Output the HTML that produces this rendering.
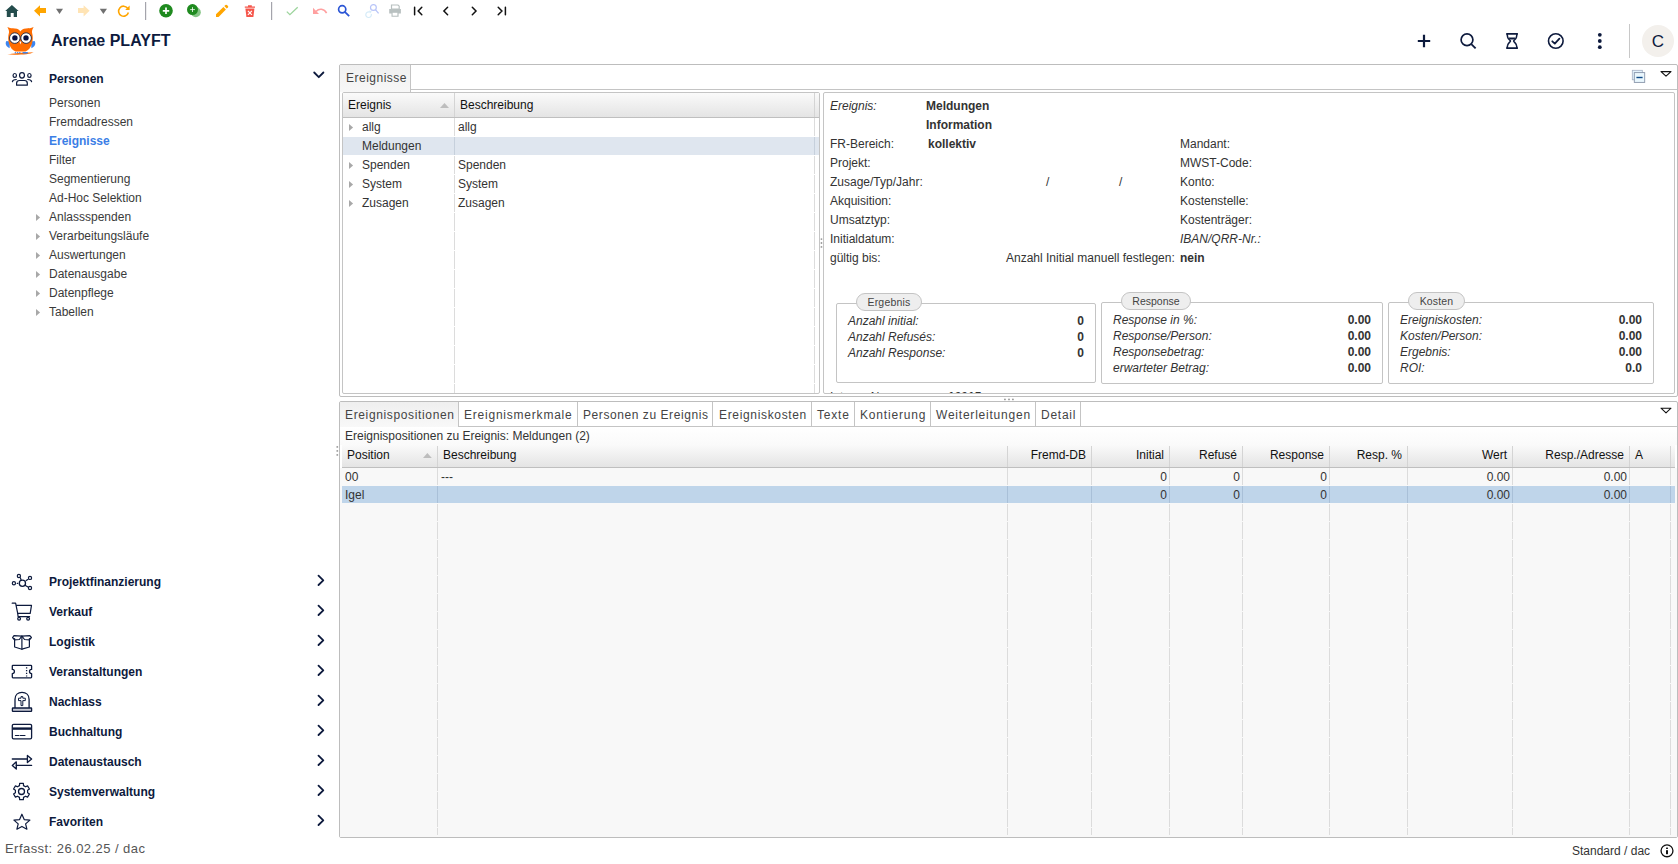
<!DOCTYPE html>
<html><head><meta charset="utf-8">
<style>
*{box-sizing:border-box;margin:0;padding:0}
html,body{width:1678px;height:864px;overflow:hidden;background:#fff;font-family:"Liberation Sans",sans-serif;font-size:12px;color:#333}
.a{position:absolute}
.t{position:absolute;white-space:nowrap;line-height:14px}
svg{position:absolute;overflow:visible}
/* sidebar */
.mh{position:absolute;left:49px;font-weight:bold;color:#0d1a3d;font-size:12px;line-height:14px;white-space:nowrap}
.mi{position:absolute;left:49px;color:#3a3a3a;font-size:12px;line-height:14px;white-space:nowrap}
.tri{position:absolute;width:0;height:0;border-top:4px solid transparent;border-bottom:4px solid transparent;border-left:4px solid #a8a8a8}
/* panels */
.box{position:absolute;border:1px solid #bdbdbd}
.hdr{position:absolute;background:linear-gradient(#fafafa,#e4e4e4);border-bottom:1px solid #bfbfbf;color:#111}
.tab{position:absolute;top:0;height:100%;border-right:1px solid #c4c4c4;color:#444;font-size:12px;letter-spacing:0.5px;line-height:14px;padding-top:6px;white-space:nowrap}
.lbl{position:absolute;white-space:nowrap;line-height:14px;color:#333}
.it{font-style:italic}
.b{font-weight:bold}
.vd{position:absolute;width:0;border-left:1px dashed #d8d8d8}
</style></head><body>

<!-- ===== TOOLBAR ===== -->
<svg style="left:0;top:0" width="520" height="24" viewBox="0 0 520 24">
 <!-- home -->
 <path d="M11.9 5 L5.2 10.9 H6.8 V17 H10.7 V12.9 H13.7 V17 H17 V10.9 H18.6 Z" fill="#244c4c"/>
 <!-- back -->
 <path d="M34 10.8 L40 5.2 V8.1 H46 V13.1 H40 V16.5 Z" fill="#ffa500"/>
 <path d="M56 8.8 H63 L59.5 14 Z" fill="#707070"/>
 <!-- fwd -->
 <path d="M89.6 10.8 L83.6 5.2 V8.1 H78 V13.1 H83.6 V16.5 Z" fill="#ffe4b5"/>
 <path d="M99.8 8.8 H107 L103.4 14 Z" fill="#707070"/>
 <!-- refresh -->
 <path d="M127.6 8.2 A5 5 0 1 0 128.4 12.5" fill="none" stroke="#ffa500" stroke-width="1.6"/>
 <path d="M129.6 5.6 V10 H125.2 Z" fill="#ffa500"/>
 <rect x="145" y="2" width="1.2" height="18" fill="#a4a4ac"/>
 <!-- add -->
 <circle cx="166" cy="10.8" r="6.8" fill="#1f8a1f"/>
 <path d="M166 7.6 V14 M162.8 10.8 H169.2" stroke="#fff" stroke-width="1.7"/>
 <!-- add copy -->
 <circle cx="195.8" cy="12.2" r="5" fill="#86c586"/>
 <circle cx="192.5" cy="9.6" r="5.5" fill="#1f8a1f"/>
 <path d="M192.5 7.2 V12 M190.1 9.6 H194.9" stroke="#fff" stroke-width="0.8"/>
 <!-- pencil -->
 <path d="M216 16.9 L216 14.3 L223.4 6.9 L225.9 9.4 L218.6 16.9 Z" fill="#ffa500"/>
 <path d="M224.3 6.1 L225.5 4.9 Q226.2 4.4 226.9 5 L228 6.1 Q228.5 6.8 228 7.4 L226.7 8.6 Z" fill="#ffa500"/>
 <!-- trash -->
 <path d="M244.8 6.4 H255 V7.8 H244.8 Z M248 5.2 H251.8 V6.4 H248 Z" fill="#f5554a"/>
 <path d="M245.4 8.4 H254.4 L253.4 17 H246.4 Z" fill="#f5554a"/>
 <path d="M247.9 10.9 L251.9 14.9 M251.9 10.9 L247.9 14.9" stroke="#fff" stroke-width="1.2"/>
 <rect x="271" y="2" width="1.2" height="18" fill="#a4a4ac"/>
 <!-- check -->
 <path d="M286.8 11.6 L289.9 14.7 L297.7 7.3" fill="none" stroke="#9cd49c" stroke-width="1.3"/>
 <!-- undo -->
 <path d="M316 11.5 C319 8.3 324 8.3 326.6 13.2" fill="none" stroke="#ffa0a0" stroke-width="1.6"/>
 <path d="M313 7.8 V14 H319 Z" fill="#ffa0a0"/>
 <!-- search -->
 <circle cx="342.2" cy="9.3" r="3.6" fill="none" stroke="#2a55d5" stroke-width="1.7"/>
 <path d="M344.8 11.9 L349.2 16.1" stroke="#2a55d5" stroke-width="1.8"/>
 <!-- search refresh -->
 <circle cx="373.4" cy="7.5" r="2.9" fill="none" stroke="#b8c4f8" stroke-width="1.2"/>
 <path d="M375.4 9.6 L378.6 13.4" stroke="#b8c4f8" stroke-width="1.3"/>
 <path d="M371.3 14 A2.8 2.8 0 1 1 369.6 12.1" fill="none" stroke="#d5ebf8" stroke-width="1.2"/><path d="M369 10.6 L371.8 11.6 L370 13.6 Z" fill="#d5ebf8"/>
 <!-- print -->
 <path d="M391.5 5 H398 L399.2 6.2 V9 H391.5 Z" fill="none" stroke="#b8c0c0" stroke-width="1.2"/>
 <path d="M389.2 9 H400.9 V13.6 H398.6 V16.7 H391.5 V13.6 H389.2 Z" fill="#b8c0c0"/>
 <rect x="392.6" y="12.8" width="4.8" height="2.9" fill="#fff"/>
 <!-- nav -->
 <g fill="none" stroke="#111" stroke-width="1.5" stroke-linecap="round" stroke-linejoin="miter">
  <path d="M414.6 7.3 V14.7 M421.8 7.3 L418.2 11 L421.8 14.7"/>
  <path d="M447.6 7.3 L443.9 11 L447.6 14.7"/>
  <path d="M472.3 7.3 L476 11 L472.3 14.7"/>
  <path d="M498.2 7.3 L501.9 11 L498.2 14.7 M505.4 7.3 V14.7"/>
 </g>
</svg>

<!-- ===== HEADER ===== -->
<svg style="left:0;top:0" width="40" height="60" viewBox="0 0 40 60">
 <path d="M6.4 41 C4.8 43.5 6 46.6 9.6 48.2 L10 41.5 Z" fill="#3d86f0"/>
 <path d="M34.6 41 C36.2 43.5 35 46.6 31.4 48.2 L31 41.5 Z" fill="#3d86f0"/>
 <path d="M7.4 27.1 C10 28.6 12 28.2 15 28.4 C18 28.6 19.6 30 20.4 31.6 C21.2 30 23 28.6 26 28.4 C29 28.2 31 28.6 33.6 27.1 C32.6 29.4 31.8 30.6 32 32.4 C33 36 33.2 40 31.8 44 C30.6 47.6 28.6 50.4 25.5 51.4 H15.5 C12.4 50.4 10.4 47.6 9.2 44 C7.8 40 8 36 9 32.4 C9.2 30.6 8.4 29.4 7.4 27.1 Z" fill="#ff6d00"/>
 <circle cx="14.8" cy="38.1" r="5.3" fill="#fff" stroke="#1b2340" stroke-width="0.9"/>
 <circle cx="26.1" cy="38.1" r="5.3" fill="#fff" stroke="#1b2340" stroke-width="0.9"/>
 <circle cx="14.9" cy="37.9" r="2.7" fill="#0a1040"/>
 <circle cx="26" cy="37.9" r="2.7" fill="#0a1040"/>
 <path d="M19.4 41.5 L21.4 41.5 L20.4 44.6 Z" fill="#fff"/>
 <path d="M7.2 54.6 C12 53.2 22 52.6 33.6 52.2 C30 54.4 20 55 7.2 54.6 Z" fill="#ff6d00"/>
 <g fill="#3d86f0"><circle cx="15.4" cy="52.7" r="0.8"/><circle cx="17.6" cy="52.7" r="0.8"/><circle cx="19.8" cy="52.7" r="0.8"/><rect x="22.4" y="51.9" width="5.6" height="1.6" rx="0.8"/></g>
</svg>
<!-- right header icons -->
<svg style="left:1400px;top:20px" width="278" height="44" viewBox="1400 20 278 44">
 <path d="M1424 34.8 V47.2 M1417.8 41 H1430.2" stroke="#0d1a3d" stroke-width="2.2"/>
 <circle cx="1467" cy="39.8" r="5.9" fill="none" stroke="#0d1a3d" stroke-width="1.7"/>
 <path d="M1471.3 44.1 L1475.6 48.4" stroke="#0d1a3d" stroke-width="1.8"/>
 <path d="M1506.2 33.8 H1517.9 M1506.2 48.2 H1517.9" stroke="#0d1a3d" stroke-width="1.7"/>
 <path d="M1507.1 34 L1507.7 37.4 C1508.2 39.4 1510.4 40.2 1510.5 41 C1510.4 41.8 1508 43 1507.6 45.4 L1507.1 48 M1517 34 L1516.4 37.4 C1515.9 39.4 1513.7 40.2 1513.6 41 C1513.7 41.8 1516.1 43 1516.5 45.4 L1517 48" fill="none" stroke="#0d1a3d" stroke-width="1.5"/>
 <path d="M1508.4 37.6 H1515.7 L1514.4 39.4 H1509.7 Z" fill="#0d1a3d"/>
 <circle cx="1555.8" cy="41" r="7.3" fill="none" stroke="#0d1a3d" stroke-width="1.6"/>
 <path d="M1552.3 41.3 L1554.8 43.6 L1559.4 38.6" fill="none" stroke="#0d1a3d" stroke-width="1.8" stroke-linecap="round" stroke-linejoin="round"/>
 <circle cx="1599.8" cy="34.8" r="1.9" fill="#0d1a3d"/><circle cx="1599.8" cy="41" r="1.9" fill="#0d1a3d"/><circle cx="1599.8" cy="47.2" r="1.9" fill="#0d1a3d"/>
 <rect x="1629" y="24" width="1" height="34" fill="#c8c8c8"/>
 <circle cx="1658" cy="41" r="16" fill="#f3f0ec"/>
</svg>
<div class="t" style="left:1642px;top:32px;width:32px;text-align:center;font-size:17px;line-height:20px;color:#0d1a3d">C</div>
<div class="t" style="left:51px;top:32px;font-size:16px;line-height:18px;font-weight:bold;color:#0d1a3d">Arenae PLAYFT</div>

<!-- ===== SIDEBAR ===== -->
<svg style="left:0;top:60px" width="340" height="790" viewBox="0 60 340 790">
 <g fill="none" stroke="#0d1a3d" stroke-width="1.2" stroke-linecap="round" stroke-linejoin="round">
  <!-- people -->
  <ellipse cx="22" cy="75.35" rx="2.45" ry="2.75"/>
  <ellipse cx="14.75" cy="75.4" rx="1.7" ry="1.9"/>
  <ellipse cx="29.4" cy="75.4" rx="1.7" ry="1.9"/>
  <path d="M16.6 85.2 V83.2 C16.6 81.4 17.6 80.5 19.6 80.5 H24.4 C26.4 80.5 27.3 81.4 27.3 83.2 V85.2 Z"/>
  <path d="M12.4 81.6 C12.6 80.2 13.4 79.5 16.3 79.5"/>
  <path d="M31.6 81.6 C31.4 80.2 30.6 79.5 27.7 79.5"/>
  <!-- chevron down -->
  <path d="M314.2 72.5 L318.8 77.2 L323.4 72.5" stroke-width="1.8"/>
  <!-- projekt -->
  <circle cx="22.4" cy="583.3" r="3.1" stroke-width="1.3"/>
  <circle cx="18.9" cy="576" r="1.6" stroke-width="1.2"/>
  <circle cx="30" cy="577.9" r="1.6" stroke-width="1.2"/>
  <circle cx="30" cy="588" r="1.6" stroke-width="1.2"/>
  <circle cx="13.9" cy="583.3" r="1.6" stroke-width="1.2"/>
  <path d="M20.4 577.9 L21.2 580.3 M26.2 580.6 L27.8 579.6 M25.4 585.4 L28 587 M17.2 583.3 L17.8 583.3"/>
  <!-- cart -->
  <path d="M12.2 603.2 H15.6 L17.7 613.4 H30.2 L31.5 605.4 H16.3"/>
  <path d="M17.7 613.4 L18.1 616.6 H29.6"/>
  <circle cx="19.1" cy="618.8" r="1.4"/><circle cx="28.1" cy="618.8" r="1.4"/>
  <!-- box -->
  <path d="M14.6 638.5 V647 L21.9 649.2 L29.4 647 V638.5"/>
  <path d="M21.9 635.8 V649.2"/>
  <path d="M12.6 637.5 L14 635.6 L21.9 636.2 L29.8 635.6 L31.4 637.5 L29.5 639.8 L24.5 639.5 L21.9 636.2 L19.3 639.5 L14.5 639.8 Z"/>
  <!-- ticket -->
  <path d="M13 665.3 H30.9 Q31.6 665.3 31.6 666 V669.4 A2.1 2.1 0 0 0 31.6 673.6 V677.1 Q31.6 677.8 30.9 677.8 H13 Q12.3 677.8 12.3 677.1 V673.6 A2.1 2.1 0 0 0 12.3 669.4 V666 Q12.3 665.3 13 665.3 Z" stroke-width="1.3"/>
  <path d="M26.6 667.2 V676.6" stroke-dasharray="1.3 1.5" stroke-width="1.3" stroke-linecap="butt"/>
  <!-- tombstone -->
  <path d="M15 708 V699.4 C15 695 18 692.4 22 692.4 C26 692.4 29.1 695 29.1 699.4 V708" stroke-width="1.3"/>
  <rect x="12.4" y="708" width="19.2" height="3.4" rx="0.5" stroke-width="1.3" fill="#c8cad4"/>
  <path d="M21 705.2 V700.6 H18.5 V698.2 H21 V696.6 H22.8 V698.2 H25.3 V700.6 H22.8 V705.2 Z" stroke-width="1"/>
  <!-- card -->
  <rect x="12.3" y="724.3" width="19.3" height="14.5" rx="1.3" stroke-width="1.3"/>
  <path d="M13 728.6 H31" stroke-width="2.4" stroke-linecap="butt"/>
  <path d="M15.4 735.5 H19 M20.4 735.5 H25" stroke-width="1.1"/>
  <!-- exchange -->
  <path d="M12.3 759 H27.4 M16.3 765.4 H31.6" stroke-width="1.3"/>
  <path d="M27.4 755.4 L31.6 759 L27.4 762.6 Z M16.3 761.8 L12.3 765.4 L16.3 769 Z" stroke-width="1.3"/>
  <!-- star -->
  <path d="M21.9 814.2 L24.2 819.6 L29.9 820.1 L25.6 823.9 L26.9 829.2 L21.9 826.4 L16.9 829.2 L18.2 823.9 L13.9 820.1 L19.6 819.6 Z" stroke-width="1.2"/>
  <!-- inner gear -->
  <circle cx="21.5" cy="791.5" r="3" stroke-width="1.3"/>
 </g>
 <g fill="none" stroke="#0d1a3d" stroke-width="1.8" stroke-linecap="round" stroke-linejoin="round">
  <path d="M318.5 575.6 L323.3 580.3 L318.5 585"/>
  <path d="M318.5 605.6 L323.3 610.3 L318.5 615"/>
  <path d="M318.5 635.6 L323.3 640.3 L318.5 645"/>
  <path d="M318.5 665.6 L323.3 670.3 L318.5 675"/>
  <path d="M318.5 695.6 L323.3 700.3 L318.5 705"/>
  <path d="M318.5 725.6 L323.3 730.3 L318.5 735"/>
  <path d="M318.5 755.6 L323.3 760.3 L318.5 765"/>
  <path d="M318.5 785.6 L323.3 790.3 L318.5 795"/>
  <path d="M318.5 815.6 L323.3 820.3 L318.5 825"/>
 </g>
 <path d="M19.48 785.64 L19.63 783.41 L23.37 783.41 L23.52 785.64 L25.57 786.82 L27.57 785.84 L29.44 789.07 L27.59 790.32 L27.59 792.68 L29.44 793.93 L27.57 797.16 L25.57 796.18 L23.52 797.36 L23.37 799.59 L19.63 799.59 L19.48 797.36 L17.43 796.18 L15.43 797.16 L13.56 793.93 L15.41 792.68 L15.41 790.32 L13.56 789.07 L15.43 785.84 L17.43 786.82 Z" fill="none" stroke="#0d1a3d" stroke-width="1.2" stroke-linejoin="round"/>
 <g fill="#a8a8a8">
  <path d="M36 214 L40.1 217.5 L36 221 Z"/>
  <path d="M36 233 L40.1 236.5 L36 240 Z"/>
  <path d="M36 252 L40.1 255.5 L36 259 Z"/>
  <path d="M36 271 L40.1 274.5 L36 278 Z"/>
  <path d="M36 290 L40.1 293.5 L36 297 Z"/>
  <path d="M36 309 L40.1 312.5 L36 316 Z"/>
 </g>
</svg>
<div id="sidebar">
<div class="mh" style="top:72px">Personen</div>
<div class="mi" style="top:96px">Personen</div>
<div class="mi" style="top:115px">Fremdadressen</div>
<div class="mi" style="top:134px;color:#3b7ee6;font-weight:bold">Ereignisse</div>
<div class="mi" style="top:153px">Filter</div>
<div class="mi" style="top:172px">Segmentierung</div>
<div class="mi" style="top:191px">Ad-Hoc Selektion</div>
<div class="mi" style="top:210px">Anlassspenden</div>
<div class="mi" style="top:229px">Verarbeitungsläufe</div>
<div class="mi" style="top:248px">Auswertungen</div>
<div class="mi" style="top:267px">Datenausgabe</div>
<div class="mi" style="top:286px">Datenpflege</div>
<div class="mi" style="top:305px">Tabellen</div>

<div class="mh" style="top:575px">Projektfinanzierung</div>
<div class="mh" style="top:605px">Verkauf</div>
<div class="mh" style="top:635px">Logistik</div>
<div class="mh" style="top:665px">Veranstaltungen</div>
<div class="mh" style="top:695px">Nachlass</div>
<div class="mh" style="top:725px">Buchhaltung</div>
<div class="mh" style="top:755px">Datenaustausch</div>
<div class="mh" style="top:785px">Systemverwaltung</div>
<div class="mh" style="top:815px">Favoriten</div>
<div class="t" style="left:5px;top:842px;font-size:13px;color:#555;letter-spacing:0.45px">Erfasst: 26.02.25 / dac</div>
</div>

<!-- ===== MAIN TOP PANEL ===== -->
<div class="box" style="left:339px;top:64px;width:1339px;height:333px;border-radius:2px"></div>
<div class="a" style="left:410px;top:89px;width:1267px;height:1px;background:#c4c4c4"></div>
<div class="a" style="left:340px;top:65px;width:71px;height:27px;background:linear-gradient(#f0f0f0,#f7f7f7);border-right:1px solid #c4c4c4"></div>
<div class="t" style="left:346px;top:71px;color:#444;letter-spacing:0.5px">Ereignisse</div>
<!-- panel icons -->
<svg style="left:1628px;top:66px" width="48" height="20" viewBox="1628 66 48 20">
 <rect x="1632.3" y="70.3" width="10" height="9.5" fill="#e2f2fc" stroke="#a4b0c4" stroke-width="0.8"/>
 <rect x="1634.3" y="72.6" width="10.4" height="9.8" fill="#eaf7fd" stroke="#8894aa" stroke-width="0.9"/>
 <path d="M1636.4 77.5 H1642.6" stroke="#0f4a88" stroke-width="1.4"/>
 <path d="M1661 71.6 H1671 L1666 76.2 Z" fill="#fff" stroke="#111" stroke-width="1.1" stroke-linejoin="round"/>
</svg>

<!-- upper tree grid -->
<div class="a" style="left:342px;top:92px;width:478px;height:302px;border:1px solid #c4c4c4;background:#fff;border-radius:2px"></div>
<div class="hdr" style="left:343px;top:93px;width:476px;height:25px"></div>
<div class="a" style="left:454px;top:93px;width:1px;height:24px;background:#d4d4d4"></div>
<div class="a" style="left:814px;top:93px;width:1px;height:24px;background:#d4d4d4"></div>
<div class="t" style="left:348px;top:98px;color:#111">Ereignis</div>
<svg style="left:438px;top:100px" width="14" height="10" viewBox="438 100 14 10"><path d="M440 108 L444.5 103 L449 108 Z" fill="#bdbdbd"/></svg>
<div class="t" style="left:460px;top:98px;color:#111">Beschreibung</div>
<div class="a" style="left:343px;top:137px;width:476px;height:18px;background:#dfe6ef"></div>
<div class="vd" style="left:454px;top:118px;height:275px;border:none;width:1px;background:repeating-linear-gradient(#dcdcdc 0 18px,transparent 18px 19px)"></div>
<div class="vd" style="left:814px;top:118px;height:275px;border:none;width:1px;background:repeating-linear-gradient(#dcdcdc 0 18px,transparent 18px 19px)"></div>
<div class="a" style="left:454px;top:137px;width:1px;height:18px;background:#c6d0dc"></div>
<div class="a" style="left:814px;top:137px;width:1px;height:18px;background:#c6d0dc"></div>
<svg style="left:349px;top:124px" width="5" height="7" viewBox="0 0 5 7"><path d="M0 0 L4.1 3.5 L0 7 Z" fill="#a8a8a8"/></svg>
<svg style="left:349px;top:162px" width="5" height="7" viewBox="0 0 5 7"><path d="M0 0 L4.1 3.5 L0 7 Z" fill="#a8a8a8"/></svg>
<svg style="left:349px;top:181px" width="5" height="7" viewBox="0 0 5 7"><path d="M0 0 L4.1 3.5 L0 7 Z" fill="#a8a8a8"/></svg>
<svg style="left:349px;top:200px" width="5" height="7" viewBox="0 0 5 7"><path d="M0 0 L4.1 3.5 L0 7 Z" fill="#a8a8a8"/></svg>
<div class="t" style="left:362px;top:120px">allg</div><div class="t" style="left:458px;top:120px">allg</div>
<div class="t" style="left:362px;top:139px">Meldungen</div>
<div class="t" style="left:362px;top:158px">Spenden</div><div class="t" style="left:458px;top:158px">Spenden</div>
<div class="t" style="left:362px;top:177px">System</div><div class="t" style="left:458px;top:177px">System</div>
<div class="t" style="left:362px;top:196px">Zusagen</div><div class="t" style="left:458px;top:196px">Zusagen</div>

<!-- splitter grip -->
<svg style="left:816px;top:234px" width="12" height="18" viewBox="816 234 12 18"><g fill="#9a9a9a"><circle cx="821.45" cy="239.1" r="0.95"/><circle cx="821.45" cy="243" r="0.95"/><circle cx="821.45" cy="246.9" r="0.95"/></g></svg>

<!-- detail panel -->
<div class="a" style="left:823px;top:92px;width:852px;height:302px;border:1px solid #c4c4c4;background:#fff;border-radius:2px;overflow:hidden">
 <div class="t" style="left:6px;top:297px;color:#333">Interne Nummer:</div>
 <div class="t b" style="left:124px;top:297px;color:#333">10015</div>
</div>
<div class="t it" style="left:830px;top:99px">Ereignis:</div>
<div class="t b" style="left:926px;top:99px">Meldungen</div>
<div class="t b" style="left:926px;top:118px">Information</div>
<div class="t" style="left:830px;top:137px">FR-Bereich:</div>
<div class="t b" style="left:928px;top:137px">kollektiv</div>
<div class="t" style="left:830px;top:156px">Projekt:</div>
<div class="t" style="left:830px;top:175px">Zusage/Typ/Jahr:</div>
<div class="t" style="left:1046px;top:175px">/</div>
<div class="t" style="left:1119px;top:175px">/</div>
<div class="t" style="left:830px;top:194px">Akquisition:</div>
<div class="t" style="left:830px;top:213px">Umsatztyp:</div>
<div class="t" style="left:830px;top:232px">Initialdatum:</div>
<div class="t" style="left:830px;top:251px">gültig bis:</div>
<div class="t" style="left:1006px;top:251px">Anzahl Initial manuell festlegen:</div>
<div class="t b" style="left:1180px;top:251px">nein</div>
<div class="t" style="left:1180px;top:137px">Mandant:</div>
<div class="t" style="left:1180px;top:156px">MWST-Code:</div>
<div class="t" style="left:1180px;top:175px">Konto:</div>
<div class="t" style="left:1180px;top:194px">Kostenstelle:</div>
<div class="t" style="left:1180px;top:213px">Kostenträger:</div>
<div class="t it" style="left:1180px;top:232px">IBAN/QRR-Nr.:</div>

<!-- fieldsets -->
<div class="a" style="left:836px;top:303px;width:260px;height:80px;border:1px solid #c4c4c4;border-radius:2px"></div>
<div class="a" style="left:856px;top:293px;width:66px;height:18px;border:1px solid #c4c4c4;border-radius:9px;background:#eee"></div>
<div class="t" style="left:856px;top:295px;width:66px;text-align:center;font-size:10.5px;color:#444;letter-spacing:0.2px">Ergebnis</div>
<div class="t it" style="left:848px;top:314px">Anzahl initial:</div><div class="t b" style="left:1000px;top:314px;width:84px;text-align:right">0</div>
<div class="t it" style="left:848px;top:330px">Anzahl Refusés:</div><div class="t b" style="left:1000px;top:330px;width:84px;text-align:right">0</div>
<div class="t it" style="left:848px;top:346px">Anzahl Response:</div><div class="t b" style="left:1000px;top:346px;width:84px;text-align:right">0</div>

<div class="a" style="left:1101px;top:302px;width:282px;height:82px;border:1px solid #c4c4c4;border-radius:2px"></div>
<div class="a" style="left:1121px;top:292px;width:70px;height:18px;border:1px solid #c4c4c4;border-radius:9px;background:#eee"></div>
<div class="t" style="left:1121px;top:294px;width:70px;text-align:center;font-size:10.5px;color:#444">Response</div>
<div class="t it" style="left:1113px;top:313px">Response in %:</div><div class="t b" style="left:1271px;top:313px;width:100px;text-align:right">0.00</div>
<div class="t it" style="left:1113px;top:329px">Response/Person:</div><div class="t b" style="left:1271px;top:329px;width:100px;text-align:right">0.00</div>
<div class="t it" style="left:1113px;top:345px">Responsebetrag:</div><div class="t b" style="left:1271px;top:345px;width:100px;text-align:right">0.00</div>
<div class="t it" style="left:1113px;top:361px">erwarteter Betrag:</div><div class="t b" style="left:1271px;top:361px;width:100px;text-align:right">0.00</div>

<div class="a" style="left:1388px;top:302px;width:266px;height:82px;border:1px solid #c4c4c4;border-radius:2px"></div>
<div class="a" style="left:1408px;top:292px;width:57px;height:18px;border:1px solid #c4c4c4;border-radius:9px;background:#eee"></div>
<div class="t" style="left:1408px;top:294px;width:57px;text-align:center;font-size:10.5px;color:#444;letter-spacing:0.15px">Kosten</div>
<div class="t it" style="left:1400px;top:313px">Ereigniskosten:</div><div class="t b" style="left:1542px;top:313px;width:100px;text-align:right">0.00</div>
<div class="t it" style="left:1400px;top:329px">Kosten/Person:</div><div class="t b" style="left:1542px;top:329px;width:100px;text-align:right">0.00</div>
<div class="t it" style="left:1400px;top:345px">Ergebnis:</div><div class="t b" style="left:1542px;top:345px;width:100px;text-align:right">0.00</div>
<div class="t it" style="left:1400px;top:361px">ROI:</div><div class="t b" style="left:1542px;top:361px;width:100px;text-align:right">0.0</div>

<!-- horizontal splitter grip -->
<svg style="left:1000px;top:396px" width="18" height="6" viewBox="1000 396 18 6"><g fill="#9a9a9a"><circle cx="1004.95" cy="399.4" r="0.95"/><circle cx="1009" cy="399.4" r="0.95"/><circle cx="1012.9" cy="399.4" r="0.95"/></g></svg>

<!-- ===== MAIN BOTTOM PANEL ===== -->
<div class="box" style="left:339px;top:401px;width:1339px;height:437px;border-radius:2px;background:#fff"></div>
<div class="a" style="left:340px;top:468px;width:1337px;height:369px;background:#f8f8f8"></div>
<div class="a" style="left:458px;top:426px;width:1219px;height:1px;background:#c4c4c4"></div>
<div class="a" style="left:340px;top:402px;width:119px;height:25px;background:linear-gradient(#efefef,#f8f8f8);border-right:1px solid #c4c4c4"></div>
<div class="a" style="left:577px;top:402px;width:1px;height:24px;background:#c4c4c4"></div>
<div class="a" style="left:712px;top:402px;width:1px;height:24px;background:#c4c4c4"></div>
<div class="a" style="left:811px;top:402px;width:1px;height:24px;background:#c4c4c4"></div>
<div class="a" style="left:854px;top:402px;width:1px;height:24px;background:#c4c4c4"></div>
<div class="a" style="left:930px;top:402px;width:1px;height:24px;background:#c4c4c4"></div>
<div class="a" style="left:1035px;top:402px;width:1px;height:24px;background:#c4c4c4"></div>
<div class="a" style="left:1080px;top:402px;width:1px;height:24px;background:#c4c4c4"></div>
<div class="t" style="left:345px;top:408px;color:#444;letter-spacing:0.64px">Ereignispositionen</div>
<div class="t" style="left:464px;top:408px;color:#444;letter-spacing:0.78px">Ereignismerkmale</div>
<div class="t" style="left:583px;top:408px;color:#444;letter-spacing:0.57px">Personen zu Ereignis</div>
<div class="t" style="left:719px;top:408px;color:#444;letter-spacing:0.66px">Ereigniskosten</div>
<div class="t" style="left:817px;top:408px;color:#444;letter-spacing:0.8px">Texte</div>
<div class="t" style="left:860px;top:408px;color:#444;letter-spacing:0.83px">Kontierung</div>
<div class="t" style="left:936px;top:408px;color:#444;letter-spacing:0.78px">Weiterleitungen</div>
<div class="t" style="left:1041px;top:408px;color:#444;letter-spacing:0.74px">Detail</div>
<svg style="left:1656px;top:404px" width="20" height="12" viewBox="1656 404 20 12"><path d="M1661 408.2 H1671 L1666 412.8 Z" fill="#fff" stroke="#111" stroke-width="1.1" stroke-linejoin="round"/></svg>
<div class="a" style="left:340px;top:427px;width:1337px;height:18px;background:linear-gradient(#fff,#fafafa)"></div>
<div class="t" style="left:345px;top:429px">Ereignispositionen zu Ereignis: Meldungen (2)</div>
<svg style="left:333px;top:442px" width="6" height="18" viewBox="333 442 6 18"><g fill="#9a9a9a"><circle cx="337.3" cy="446.9" r="0.95"/><circle cx="337.3" cy="450.9" r="0.95"/><circle cx="337.3" cy="454.9" r="0.95"/></g></svg>

<div class="a" style="left:342px;top:486px;width:1333px;height:17px;background:#bfd5ea"></div>
<!-- lower grid header -->
<div class="hdr" style="left:342px;top:445px;width:1333px;height:23px"></div>
<div class="a" style="left:437px;top:446px;width:1px;height:21px;background:#d4d4d4"></div>
<div class="a" style="left:437px;top:468px;width:1px;height:367px;background:repeating-linear-gradient(#dcdcdc 0 17px,transparent 17px 18px)"></div>
<div class="a" style="left:437px;top:486px;width:1px;height:17px;background:#a9c0d8"></div>
<div class="a" style="left:1007px;top:446px;width:1px;height:21px;background:#d4d4d4"></div>
<div class="a" style="left:1007px;top:468px;width:1px;height:367px;background:repeating-linear-gradient(#dcdcdc 0 17px,transparent 17px 18px)"></div>
<div class="a" style="left:1007px;top:486px;width:1px;height:17px;background:#a9c0d8"></div>
<div class="a" style="left:1091px;top:446px;width:1px;height:21px;background:#d4d4d4"></div>
<div class="a" style="left:1091px;top:468px;width:1px;height:367px;background:repeating-linear-gradient(#dcdcdc 0 17px,transparent 17px 18px)"></div>
<div class="a" style="left:1091px;top:486px;width:1px;height:17px;background:#a9c0d8"></div>
<div class="a" style="left:1169px;top:446px;width:1px;height:21px;background:#d4d4d4"></div>
<div class="a" style="left:1169px;top:468px;width:1px;height:367px;background:repeating-linear-gradient(#dcdcdc 0 17px,transparent 17px 18px)"></div>
<div class="a" style="left:1169px;top:486px;width:1px;height:17px;background:#a9c0d8"></div>
<div class="a" style="left:1242px;top:446px;width:1px;height:21px;background:#d4d4d4"></div>
<div class="a" style="left:1242px;top:468px;width:1px;height:367px;background:repeating-linear-gradient(#dcdcdc 0 17px,transparent 17px 18px)"></div>
<div class="a" style="left:1242px;top:486px;width:1px;height:17px;background:#a9c0d8"></div>
<div class="a" style="left:1329px;top:446px;width:1px;height:21px;background:#d4d4d4"></div>
<div class="a" style="left:1329px;top:468px;width:1px;height:367px;background:repeating-linear-gradient(#dcdcdc 0 17px,transparent 17px 18px)"></div>
<div class="a" style="left:1329px;top:486px;width:1px;height:17px;background:#a9c0d8"></div>
<div class="a" style="left:1407px;top:446px;width:1px;height:21px;background:#d4d4d4"></div>
<div class="a" style="left:1407px;top:468px;width:1px;height:367px;background:repeating-linear-gradient(#dcdcdc 0 17px,transparent 17px 18px)"></div>
<div class="a" style="left:1407px;top:486px;width:1px;height:17px;background:#a9c0d8"></div>
<div class="a" style="left:1512px;top:446px;width:1px;height:21px;background:#d4d4d4"></div>
<div class="a" style="left:1512px;top:468px;width:1px;height:367px;background:repeating-linear-gradient(#dcdcdc 0 17px,transparent 17px 18px)"></div>
<div class="a" style="left:1512px;top:486px;width:1px;height:17px;background:#a9c0d8"></div>
<div class="a" style="left:1629px;top:446px;width:1px;height:21px;background:#d4d4d4"></div>
<div class="a" style="left:1629px;top:468px;width:1px;height:367px;background:repeating-linear-gradient(#dcdcdc 0 17px,transparent 17px 18px)"></div>
<div class="a" style="left:1629px;top:486px;width:1px;height:17px;background:#a9c0d8"></div>
<div class="a" style="left:1670px;top:446px;width:1px;height:21px;background:#d4d4d4"></div>
<div class="a" style="left:1670px;top:468px;width:1px;height:367px;background:repeating-linear-gradient(#dcdcdc 0 17px,transparent 17px 18px)"></div>
<div class="a" style="left:1670px;top:486px;width:1px;height:17px;background:#a9c0d8"></div>
<div class="t" style="left:347px;top:448px;color:#111">Position</div>
<svg style="left:420px;top:450px" width="14" height="10" viewBox="420 450 14 10"><path d="M423 458 L427.4 453 L431.8 458 Z" fill="#bdbdbd"/></svg>
<div class="t" style="left:443px;top:448px;color:#111">Beschreibung</div>
<div class="t" style="left:986px;top:448px;width:100px;text-align:right;color:#111">Fremd-DB</div>
<div class="t" style="left:1064px;top:448px;width:100px;text-align:right;color:#111">Initial</div>
<div class="t" style="left:1137px;top:448px;width:100px;text-align:right;color:#111">Refusé</div>
<div class="t" style="left:1224px;top:448px;width:100px;text-align:right;color:#111">Response</div>
<div class="t" style="left:1302px;top:448px;width:100px;text-align:right;color:#111">Resp. %</div>
<div class="t" style="left:1407px;top:448px;width:100px;text-align:right;color:#111">Wert</div>
<div class="t" style="left:1524px;top:448px;width:100px;text-align:right;color:#111">Resp./Adresse</div>
<div class="t" style="left:1635px;top:448px;color:#111">A</div>

<!-- rows -->
<div class="t" style="left:345px;top:470px">00</div>
<div class="t" style="left:441px;top:470px">---</div>
<div class="t" style="left:1067px;top:470px;width:100px;text-align:right">0</div>
<div class="t" style="left:1140px;top:470px;width:100px;text-align:right">0</div>
<div class="t" style="left:1227px;top:470px;width:100px;text-align:right">0</div>
<div class="t" style="left:1410px;top:470px;width:100px;text-align:right">0.00</div>
<div class="t" style="left:1527px;top:470px;width:100px;text-align:right">0.00</div>
<div class="t" style="left:345px;top:488px">Igel</div>
<div class="t" style="left:1067px;top:488px;width:100px;text-align:right">0</div>
<div class="t" style="left:1140px;top:488px;width:100px;text-align:right">0</div>
<div class="t" style="left:1227px;top:488px;width:100px;text-align:right">0</div>
<div class="t" style="left:1410px;top:488px;width:100px;text-align:right">0.00</div>
<div class="t" style="left:1527px;top:488px;width:100px;text-align:right">0.00</div>

<div class="t" style="left:1572px;top:844px;font-size:12px;color:#333">Standard / dac</div>
<svg style="left:1656px;top:840px" width="22" height="22" viewBox="1656 840 22 22">
 <circle cx="1667" cy="850.8" r="5.95" fill="none" stroke="#111" stroke-width="1.3"/>
 <rect x="1666" y="847.6" width="2" height="1.3" fill="#111"/>
 <rect x="1666" y="850.2" width="2" height="4" fill="#111"/>
</svg>

</body></html>
